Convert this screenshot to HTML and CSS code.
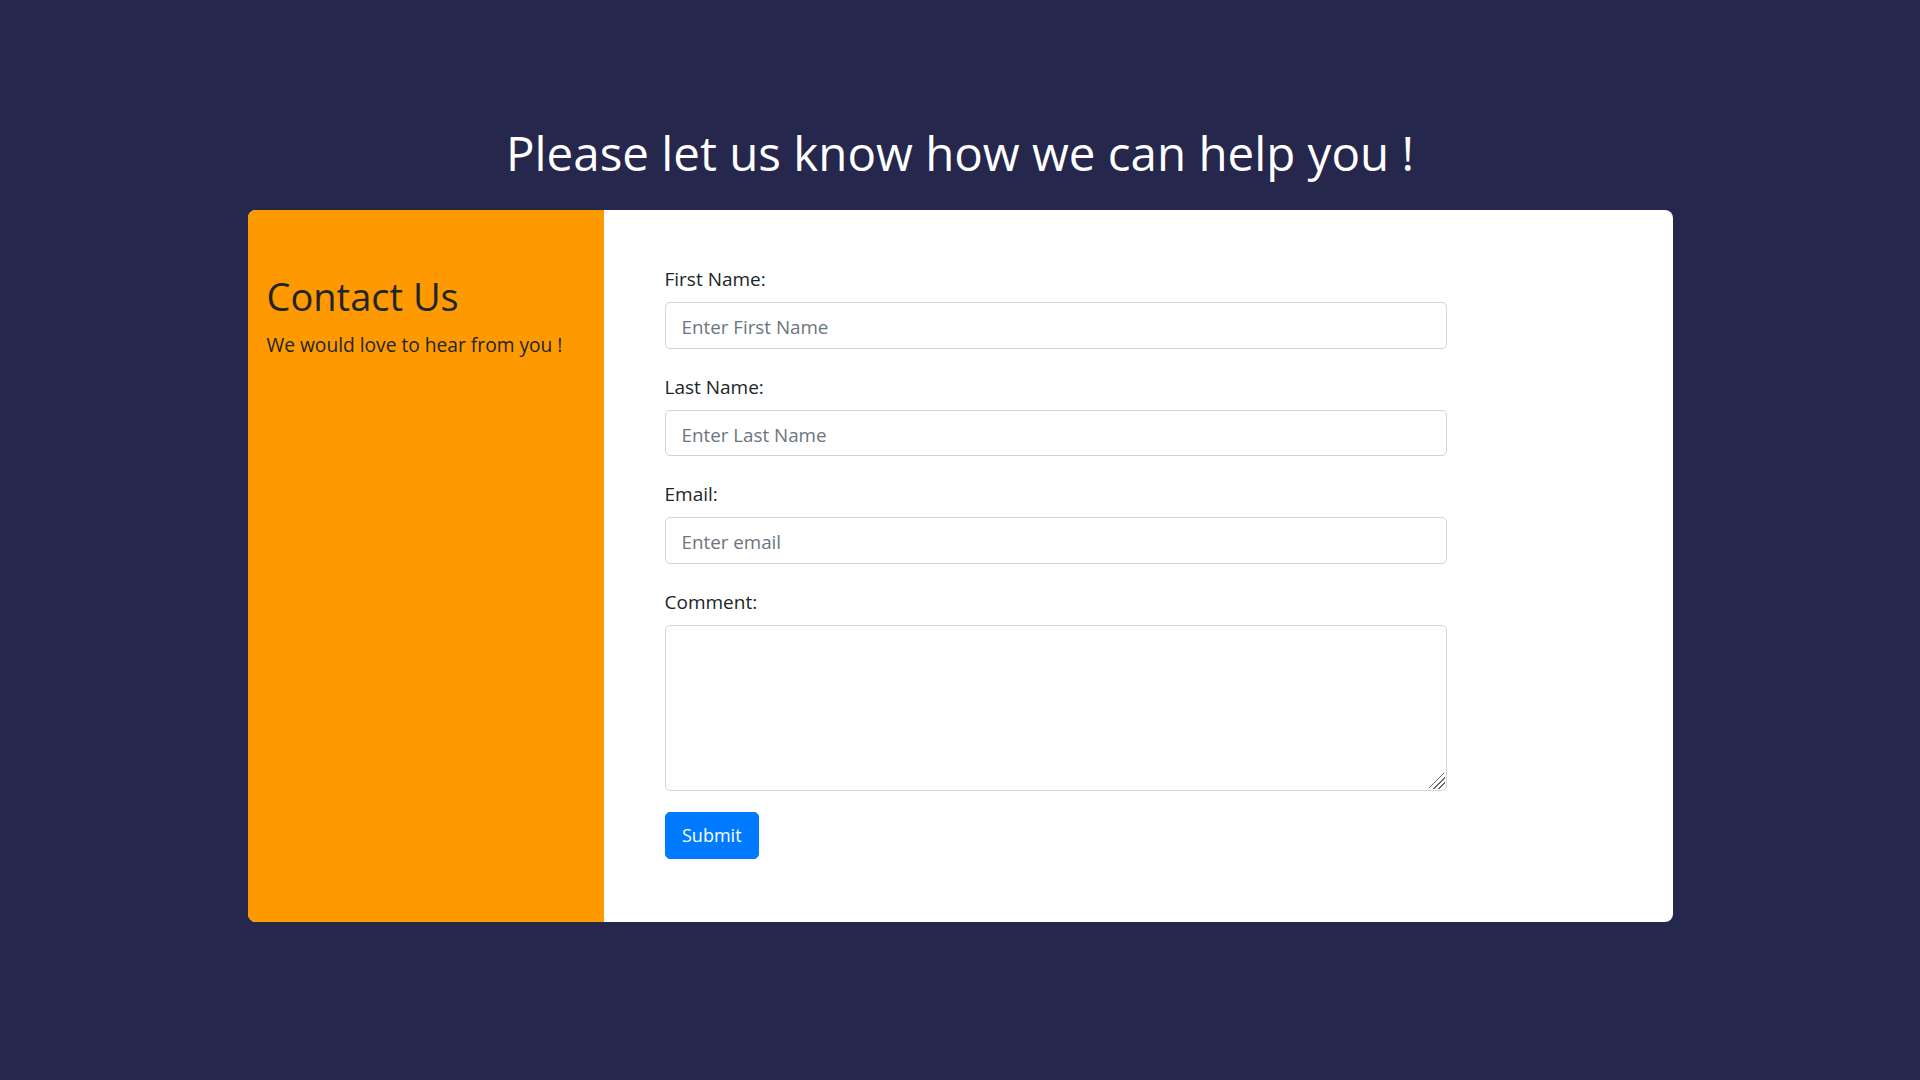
FILE: index.html
```html
<!DOCTYPE html>
<html lang="en">
<head>
<meta charset="utf-8">
<title>Contact Us</title>
<link rel="stylesheet" href="styles.css">
</head>
<body>
<main class="page">
  <h1 class="headline">Please let us know how we can help you !</h1>
  <section class="card">
    <aside class="intro">
      <h2 class="intro-title">Contact Us</h2>
      <p class="intro-text">We would love to hear from you !</p>
    </aside>
    <div class="form-area">
      <form class="contact-form">
        <div class="group">
          <label class="label" for="fname">First Name:</label>
          <input class="field" id="fname" type="text" placeholder="Enter First Name">
        </div>
        <div class="group">
          <label class="label" for="lname">Last Name:</label>
          <input class="field" id="lname" type="text" placeholder="Enter Last Name">
        </div>
        <div class="group">
          <label class="label" for="email">Email:</label>
          <input class="field" id="email" type="email" placeholder="Enter email">
        </div>
        <div class="group group-last">
          <label class="label" for="comment">Comment:</label>
          <textarea class="field area" id="comment" rows="5"></textarea>
        </div>
        <button class="submit" type="button">Submit</button>
      </form>
    </div>
  </section>
</main>
</body>
</html>
```

FILE: styles.css
```css
* { box-sizing: border-box; }

html, body {
  margin: 0;
  padding: 0;
}

body {
  background: #25274d;
  font-family: "Open Sans", "Noto Sans", "DejaVu Sans", sans-serif;
  color: #212529;
  font-size: 19px;
  min-height: 1080px;
}

.page {
  padding-top: 125px;
}

.headline {
  margin: 0 0 30px;
  text-align: center;
  color: #ffffff;
  font-size: 47.5px;
  font-weight: 400;
  line-height: 55px;
}

.card {
  width: 1425px;
  margin: 0 auto;
  display: grid;
  grid-template-columns: 356px 1fr;
  background: #ffffff;
  border-radius: 8px;
  overflow: hidden;
}

.intro {
  background: #ff9900;
  padding: 64px 19px 0;
}

.intro-title {
  margin: 0 0 12px;
  font-size: 38px;
  font-weight: 400;
  line-height: 45px;
  color: #212529;
}

.intro-text {
  margin: 0;
  font-size: 19.2px;
  line-height: 28px;
}

.form-area {
  padding: 54px 0 63px 61px;
}

.contact-form {
  width: 782px;
}

.group {
  margin-bottom: 23px;
}

.group-last {
  margin-bottom: 21px;
}

.label {
  display: block;
  font-size: 19px;
  line-height: 28px;
  padding-top: 1px;
  margin-bottom: 9px;
  color: #212529;
}

.field {
  display: block;
  width: 100%;
  height: 46.5px;
  padding: 4px 16px 0;
  border: 1px solid #ced4da;
  border-radius: 5px;
  font-family: "Open Sans", "Noto Sans", "DejaVu Sans", sans-serif;
  font-size: 18.8px;
  color: #495057;
  background: #ffffff;
  outline: none;
}

.field::placeholder {
  color: #6c757d;
  opacity: 1;
}

.area {
  height: 166px;
  padding: 8px 16px;
  resize: none;
  background-image: linear-gradient(135deg,
    transparent 0 44%,
    #6a6a6a 44% 50%,
    transparent 50% 61%,
    #6a6a6a 61% 67%,
    transparent 67% 78%,
    #6a6a6a 78% 84%,
    transparent 84%);
  background-size: 16px 16px;
  background-position: right 1px bottom 1px;
  background-repeat: no-repeat;
}

.submit {
  display: block;
  height: 47px;
  padding: 0 16.5px;
  border: 1px solid #007bff;
  border-radius: 5px;
  background: #007bff;
  color: #ffffff;
  font-family: "Open Sans", "Noto Sans", "DejaVu Sans", sans-serif;
  font-size: 18px;
  line-height: 45px;
  cursor: pointer;
}
```
